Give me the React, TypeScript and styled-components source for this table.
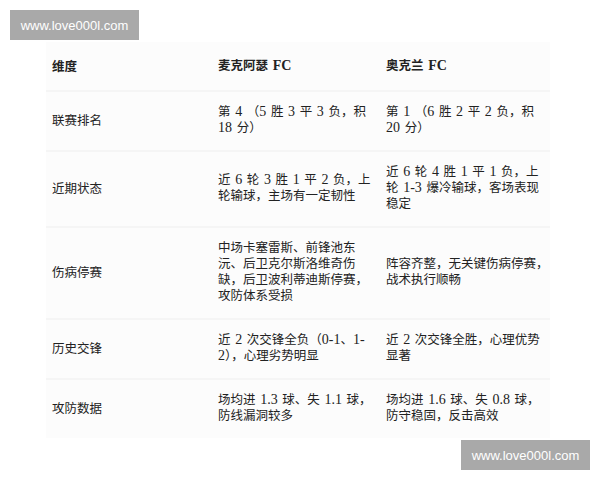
import React from "react";
import styled, { createGlobalStyle } from "styled-components";

const Global = createGlobalStyle`
  html, body { margin: 0; padding: 0; background: #ffffff; }
  body { width: 600px; height: 480px; overflow: hidden; }
`;

const Page = styled.div`
  position: relative;
  width: 600px;
  height: 480px;
  box-sizing: border-box;
  padding: 42px 0 0 46px;
  background: #ffffff;
`;

const Watermark = styled.div<{ $corner: "tl" | "br" }>`
  position: absolute;
  ${(p) => (p.$corner === "tl" ? "left: 10px; top: 10px;" : "left: 461px; top: 440px;")}
  width: 129px;
  height: 30px;
  background: #a9a9a9;
  color: #ffffff;
  font-family: "Liberation Sans", Arial, sans-serif;
  font-size: 13px;
  display: flex;
  align-items: center;
  justify-content: center;
`;

const Table = styled.div`
  display: grid;
  grid-template-columns: 166px 168px 170px;
  width: 504px;
  background: #fcfcfc;
  color: #222;
`;

const Cell = styled.div<{ $head?: boolean; $first?: boolean; $last?: boolean }>`
  box-sizing: border-box;
  padding: ${(p) => (p.$head ? "16px 6px" : "14px 6px")};
  border-bottom: ${(p) => (p.$last ? "none" : "2px solid #f5f5f5")};
  margin-bottom: ${(p) => (p.$last ? "0" : "-2px")};
  display: flex;
  align-items: center;
  font-family: ${(p) =>
    p.$first
      ? '"Noto Sans CJK SC", "Liberation Sans", sans-serif'
      : '"Liberation Serif", "Noto Sans CJK SC", serif'};
  font-size: 12.5px;
  line-height: 16px;
  font-weight: ${(p) => (p.$head ? 700 : 400)};
  white-space: pre;
  word-spacing: 1.5px;
`;

const Lines = styled.div`
  display: flex;
  flex-direction: column;
`;

const Line = styled.span`
  display: block;
  height: 16px;
`;

const Num = styled.span`
  font-family: "Liberation Serif", serif;
  font-size: 14px;
`;

function rich(text: string) {
  return text.split(/([0-9A-Za-z.\-]+)/).map((part, i) =>
    i % 2 === 1 ? <Num key={i}>{part}</Num> : <React.Fragment key={i}>{part}</React.Fragment>
  );
}

const rows: [string, string[], string[]][] = [
  ["联赛排名", ["第 4 （5 胜 3 平 3 负，积", "18 分）"], ["第 1 （6 胜 2 平 2 负，积", "20 分）"]],
  [
    "近期状态",
    ["近 6 轮 3 胜 1 平 2 负，上", "轮输球，主场有一定韧性"],
    ["近 6 轮 4 胜 1 平 1 负，上", "轮 1-3 爆冷输球，客场表现", "稳定"],
  ],
  [
    "伤病停赛",
    ["中场卡塞雷斯、前锋池东", "沅、后卫克尔斯洛维奇伤", "缺，后卫波利蒂迪斯停赛，", "攻防体系受损"],
    ["阵容齐整，无关键伤病停赛，", "战术执行顺畅"],
  ],
  ["历史交锋", ["近 2 次交锋全负（0-1、1-", "2），心理劣势明显"], ["近 2 次交锋全胜，心理优势", "显著"]],
  ["攻防数据", ["场均进 1.3 球、失 1.1 球，", "防线漏洞较多"], ["场均进 1.6 球、失 0.8 球，", "防守稳固，反击高效"]],
];

export default function App() {
  return (
    <>
      <Global />
      <Page>
        <Table>
          <Cell $head $first>维度</Cell>
          <Cell $head>{rich("麦克阿瑟 FC")}</Cell>
          <Cell $head>{rich("奥克兰 FC")}</Cell>
          {rows.map(([label, a, b], i) => {
            const last = i === rows.length - 1;
            return (
              <React.Fragment key={label}>
                <Cell $first $last={last}>{label}</Cell>
                <Cell $last={last}>
                  <Lines>{a.map((l) => <Line key={l}>{rich(l)}</Line>)}</Lines>
                </Cell>
                <Cell $last={last}>
                  <Lines>{b.map((l) => <Line key={l}>{rich(l)}</Line>)}</Lines>
                </Cell>
              </React.Fragment>
            );
          })}
        </Table>
        <Watermark $corner="tl">www.love000l.com</Watermark>
        <Watermark $corner="br">www.love000l.com</Watermark>
      </Page>
    </>
  );
}
